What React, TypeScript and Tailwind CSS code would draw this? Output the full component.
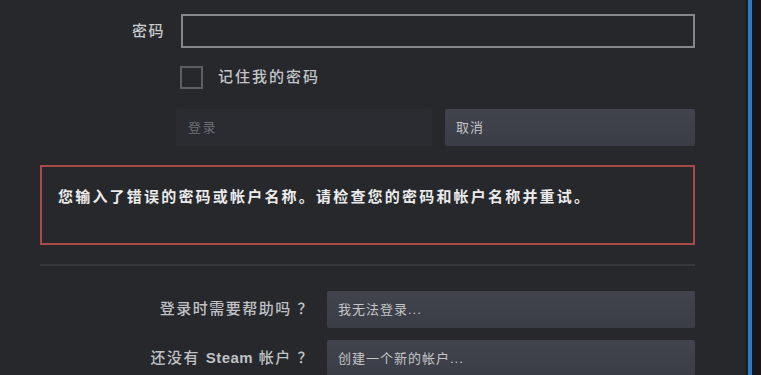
import React from 'react';

const font = { fontFamily: '"Liberation Sans", "Noto Sans CJK SC", sans-serif' };

function ActionButton({ label, dim = false }: { label: string; dim?: boolean }) {
  return (
    <button
      type="button"
      className={
        dim
          ? 'h-full w-[256px] rounded-[2px] bg-[#2a2c31] pl-[12px] text-left text-[13px] tracking-[1.5px] text-[#6c6e73]'
          : 'h-full flex-1 rounded-[2px] bg-gradient-to-b from-[#41444c] to-[#3a3d45] pl-[11px] text-left text-[13px] tracking-[1px] text-[#c4c6ca]'
      }
    >
      {label}
    </button>
  );
}

function HelpRow({ label, action, className }: { label: React.ReactNode; action: string; className: string }) {
  return (
    <div className={`flex h-[37px] items-center ${className}`}>
      <span className="w-[274px] text-right text-[15px] font-medium tracking-[1.5px] text-[#bfc1c4]">{label}</span>
      <div className="ml-[13px] flex h-full flex-1">
        <ActionButton label={action} />
      </div>
    </div>
  );
}

export default function App() {
  return (
    <div className="flex h-screen w-full overflow-hidden bg-[#26282c]" style={font}>
      <main className="flex-1 pl-[40px] pr-[50px] pt-[14px]">
        <div className="flex h-[34px] items-center">
          <span className="w-[125px] text-right text-[15px] font-medium tracking-[1.5px] text-[#c9cbce]">密码</span>
          <input
            type="password"
            className="ml-[16px] h-full flex-1 border-2 border-[#85878b] bg-[#25272b] outline-none"
          />
        </div>

        <div className="mt-[18px] flex h-[23px] items-center pl-[140px]">
          <span className="h-[23px] w-[23px] border-2 border-[#5c5e62]" />
          <span className="ml-[15px] text-[15px] font-medium tracking-[2px] text-[#c3c5c8]">记住我的密码</span>
        </div>

        <div className="mt-[20px] flex h-[37px] gap-[13px] pl-[136px]">
          <ActionButton label="登录" dim />
          <ActionButton label="取消" />
        </div>

        <div className="mt-[19px] h-[80px] border-2 border-[#a84b48] px-[16px] pt-[20px]">
          <p className="text-[15px] font-bold leading-[20px] tracking-[2.2px] text-[#ebebeb]">
            您输入了错误的密码或帐户名称。请检查您的密码和帐户名称并重试。
          </p>
        </div>

        <div className="mt-[19px] h-[2px] bg-[#36383d]" />

        <HelpRow className="mt-[25px]" label="登录时需要帮助吗 ？" action="我无法登录..." />
        <HelpRow
          className="mt-[12px]"
          label={
            <>
              还没有 <span className="font-bold tracking-[0.5px]">Steam</span> 帐户 ？
            </>
          }
          action="创建一个新的帐户..."
        />
      </main>

      <div className="w-[3px] bg-[#1e1f23]" />
      <div className="w-[4px] bg-[#2a7bc2]" />
      <div className="w-[9px] bg-[#16171a]" />
    </div>
  );
}
